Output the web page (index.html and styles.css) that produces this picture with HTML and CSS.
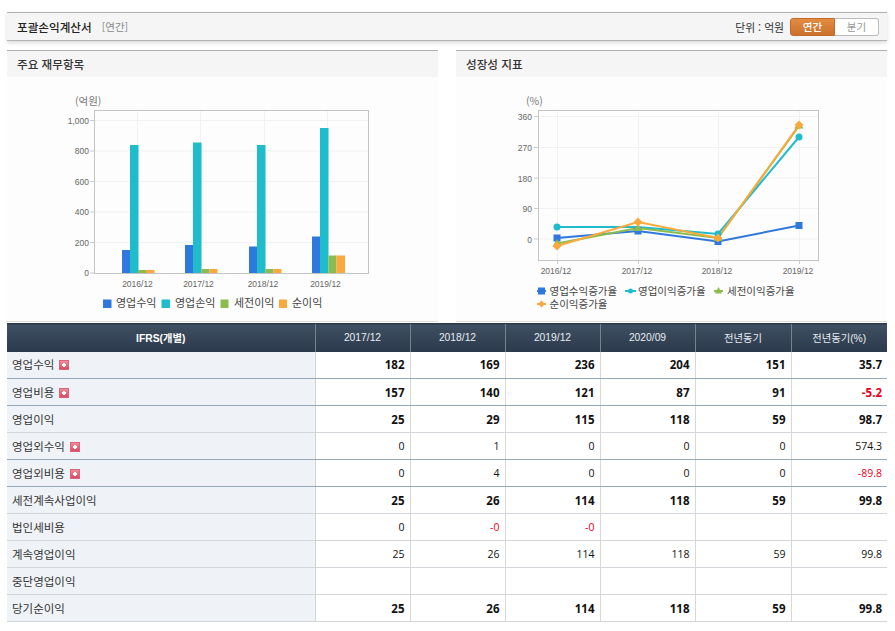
FILE: index.html
```html
<!DOCTYPE html>
<html lang="ko">
<head>
<meta charset="utf-8">
<title>포괄손익계산서</title>
<link rel="stylesheet" href="styles.css">
</head>
<body>
<div class="page">
  <div class="topbar">
    <div class="top-title"><strong>포괄손익계산서</strong><span class="period">[연간]</span></div>
    <div class="top-right">
      <span class="unit">단위 : 억원</span>
      <div class="toggle"><span class="tg on">연간</span><span class="tg off">분기</span></div>
    </div>
  </div>
  <div class="panels">
    <section class="panel">
      <h3 class="panel-title">주요 재무항목</h3>
      <svg class="chart" width="431" height="244" viewBox="7 77 431 244">
        <text class="unit-label" x="75" y="104.500">(억원)</text>
        <g class="grid">
          <path d="M94 120.5H369M94 151H369M94 181.5H369M94 212H369M94 242.5H369M137.5 110V273M200.5 110V273M264.5 110V273M327.5 110V273"/>
        </g>
        <rect class="frame" x="94.5" y="110.5" width="274" height="163"/>
        <g class="ticks"><path d="M90 120.5H94M90 151H94M90 181.5H94M90 212H94M90 242.5H94M90 273H94"/></g>
        <g class="axis" text-anchor="end">
          <text x="89" y="123.5">1,000</text><text x="89" y="154">800</text><text x="89" y="184.5">600</text><text x="89" y="215">400</text><text x="89" y="245.5">200</text><text x="89" y="276">0</text>
        </g>
        <g class="axis" text-anchor="middle">
          <text x="137.5" y="287">2016/12</text><text x="198.5" y="287">2017/12</text><text x="263" y="287">2018/12</text><text x="325.5" y="287">2019/12</text>
        </g>
        <g class="s-blue"><rect x="122" y="250" width="8" height="23"/><rect x="185" y="245" width="8" height="28"/><rect x="249" y="246.5" width="8" height="26.5"/><rect x="312" y="236.5" width="8" height="36.5"/></g>
        <g class="s-teal"><rect x="130" y="145" width="8.500" height="128"/><rect x="193" y="142.500" width="8.500" height="130.500"/><rect x="257" y="145" width="8.500" height="128"/><rect x="320" y="128" width="8.500" height="145"/></g>
        <g class="s-green"><rect x="138" y="270" width="8" height="3"/><rect x="201.500" y="269" width="8" height="4"/><rect x="265.500" y="269" width="8" height="4"/><rect x="328.500" y="255.500" width="8" height="17.500"/></g>
        <g class="s-orange"><rect x="146" y="270" width="8.500" height="3"/><rect x="209.500" y="269" width="8" height="4"/><rect x="273.500" y="269" width="8" height="4"/><rect x="336.500" y="255.500" width="8.500" height="17.500"/></g>
        <rect class="s-blue" x="103" y="299.500" width="8.500" height="8.500"/><text class="legend" x="116" y="307">영업수익</text>
        <rect class="s-teal" x="161.500" y="299.500" width="8.500" height="8.500"/><text class="legend" x="175" y="307">영업손익</text>
        <rect class="s-green" x="220.500" y="299.500" width="8" height="8.500"/><text class="legend" x="234" y="307">세전이익</text>
        <rect class="s-orange" x="279" y="299.500" width="8" height="8.500"/><text class="legend" x="292" y="307">순이익</text>
      </svg>
    </section>
    <section class="panel">
      <h3 class="panel-title">성장성 지표</h3>
      <svg class="chart" width="431" height="244" viewBox="456 77 431 244">
        <text class="unit-label" x="526" y="104.500">(%)</text>
        <g class="grid">
          <path d="M538 116.500H818M538 147.500H818M538 178H818M538 208.500H818M538 239H818M557.500 110V260M638.500 110V260M718.500 110V260M799.500 110V260"/>
        </g>
        <rect class="frame" x="538.500" y="110.500" width="280" height="150"/>
        <g class="ticks"><path d="M534 116.500H538M534 147.500H538M534 178H538M534 208.500H538M534 239H538M557.500 261V264M638.500 261V264M718.500 261V264M799.500 261V264"/></g>
        <g class="axis" text-anchor="end">
          <text x="532" y="120">360</text><text x="532" y="151">270</text><text x="532" y="181.500">180</text><text x="532" y="212">90</text><text x="532" y="242.500">0</text>
        </g>
        <g class="axis" text-anchor="middle">
          <text x="556" y="274">2016/12</text><text x="637" y="274">2017/12</text><text x="717" y="274">2018/12</text><text x="798" y="274">2019/12</text>
        </g>
        <polyline class="ln-blue" points="557,238 638,231 718,241.500 799,225.500"/>
        <polyline class="ln-teal" points="557,227 638,227 718,234 799,137"/>
        <polyline class="ln-green" points="557,243.500 638,228 718,238 799,126"/>
        <polyline class="ln-orange" points="557,246 638,222 718,238 799,125"/>
        <g class="s-blue"><rect x="553.500" y="234.500" width="7" height="7"/><rect x="634.500" y="227.500" width="7" height="7"/><rect x="714.500" y="238" width="7" height="7"/><rect x="795.500" y="222" width="7" height="7"/></g>
        <g class="s-teal"><circle cx="557" cy="227" r="3.500"/><circle cx="718" cy="234" r="3.500"/><circle cx="799" cy="137" r="3.500"/></g>
        <g class="s-green"><path d="M557 239l4.500 7.500h-9zM638 223.500l4.500 7.500h-9zM718 233.500l4.500 7.500h-9zM799 121l4.500 7.500h-9z"/></g>
        <g class="s-orange"><path d="M557 241.500l4.500 4.500-4.500 4.500-4.500-4.500zM638 217.500l4.500 4.500-4.500 4.500-4.500-4.500zM718 233.500l4.500 4.500-4.500 4.500-4.500-4.500zM799 120.500l4.500 4.500-4.500 4.500-4.500-4.500z"/></g>
        <path class="ln-blue" d="M537 291H546"/><rect class="s-blue" x="538" y="287.500" width="7" height="7"/><text class="legend narrow" x="549.500" y="295">영업수익증가율</text>
        <path class="ln-teal" d="M625 291H636"/><circle class="s-teal" cx="630.500" cy="291" r="2.500"/><text class="legend narrow" x="638" y="295">영업이익증가율</text>
        <path class="ln-green" d="M714 291H723"/><path class="s-green" d="M718.500 287l3.500 6.500h-7z"/><text class="legend narrow" x="727" y="295">세전이익증가율</text>
        <path class="ln-orange" d="M537 304H546"/><path class="s-orange" d="M541.500 300.500l3.500 3.500-3.500 3.500-3.500-3.500z"/><text class="legend narrow" x="549.500" y="308">순이익증가율</text>
      </svg>
    </section>
  </div>
  <table class="fin">
    <colgroup><col class="c-label"><col class="c-num"><col class="c-num"><col class="c-num"><col class="c-num"><col class="c-wide"><col class="c-wide"></colgroup>
    <thead>
      <tr><th class="th-first">IFRS(개별)</th><th>2017/12</th><th>2018/12</th><th>2019/12</th><th>2020/09</th><th>전년동기</th><th>전년동기(%)</th></tr>
    </thead>
    <tbody>
      <tr class="strong key"><td class="lbl">영업수익<i class="plus"></i></td><td>182</td><td>169</td><td>236</td><td>204</td><td>151</td><td>35.7</td></tr>
      <tr class="strong key"><td class="lbl">영업비용<i class="plus"></i></td><td>157</td><td>140</td><td>121</td><td>87</td><td>91</td><td class="neg">-5.2</td></tr>
      <tr class="strong"><td class="lbl">영업이익</td><td>25</td><td>29</td><td>115</td><td>118</td><td>59</td><td>98.7</td></tr>
      <tr class="key"><td class="lbl">영업외수익<i class="plus"></i></td><td>0</td><td>1</td><td>0</td><td>0</td><td>0</td><td>574.3</td></tr>
      <tr class="key"><td class="lbl">영업외비용<i class="plus"></i></td><td>0</td><td>4</td><td>0</td><td>0</td><td>0</td><td class="neg">-89.8</td></tr>
      <tr class="strong"><td class="lbl">세전계속사업이익</td><td>25</td><td>26</td><td>114</td><td>118</td><td>59</td><td>99.8</td></tr>
      <tr><td class="lbl">법인세비용</td><td>0</td><td class="neg">-0</td><td class="neg">-0</td><td></td><td></td><td></td></tr>
      <tr><td class="lbl">계속영업이익</td><td>25</td><td>26</td><td>114</td><td>118</td><td>59</td><td>99.8</td></tr>
      <tr><td class="lbl">중단영업이익</td><td></td><td></td><td></td><td></td><td></td><td></td></tr>
      <tr class="strong"><td class="lbl">당기순이익</td><td>25</td><td>26</td><td>114</td><td>118</td><td>59</td><td>99.8</td></tr>
    </tbody>
  </table>
</div>
</body>
</html>
```
FILE: styles.css
```css
* { box-sizing: border-box; }
html, body { margin: 0; padding: 0; background: #fff; }
body { font-family: "Noto Sans CJK KR", "Noto Sans", sans-serif; color: #333; overflow: hidden; }
.page { width: 880px; margin: 12px 0 0 7px; }

.topbar {
  height: 29px;
  display: flex;
  align-items: center;
  justify-content: space-between;
  padding: 0 8px 0 10px;
  background: #f5f5f5;
  border-top: 1px solid #b0b0b0;
  border-bottom: 1px solid #b4b4b4;
  box-shadow: 0 2px 4px rgba(0, 0, 0, .14);
}
.top-title { display: flex; align-items: center; font-size: 11.600px; }
.top-title strong { font-weight: 500; color: #222; }
.period { margin-left: 10px; font-size: 10.500px; color: #888; }
.top-right { display: flex; align-items: center; gap: 6px; }
.unit { font-size: 10.800px; color: #333; }
.toggle { display: flex; width: 89px; height: 18px; font-size: 10.500px; }
.tg { flex: 1; display: flex; align-items: center; justify-content: center; }
.tg.on { background: linear-gradient(#e38c42, #cb702c); border: 1px solid #c26a2a; border-radius: 3px 0 0 3px; color: #fff; font-weight: 500; }
.tg.off { background: #fff; border: 1px solid #bbb; border-left: 0; border-radius: 0 3px 3px 0; color: #999; }

.panels { display: flex; justify-content: space-between; margin-top: 9px; }
.panel { width: 431px; height: 272px; border-top: 1px solid #b0b0b0; border-bottom: 1px solid #ddd; background: #fdfdfd; }
.panel-title { margin: 0; height: 26px; padding-left: 10px; line-height: 27px; font-size: 11.600px; font-weight: 500; color: #333; background: #f5f5f5; }
.chart { display: block; }

.grid path { fill: none; stroke: #f0f1f2; stroke-width: 1; }
.frame { fill: none; stroke: #c4c4c4; stroke-width: 1; }
.ticks path { fill: none; stroke: #ccc; stroke-width: 1; }
.axis text { font-family: "Liberation Sans", sans-serif; font-size: 8.500px; fill: #666; }
.unit-label { font-size: 10.500px; fill: #777; }
.legend { font-size: 11px; fill: #444; }
.legend.narrow { font-size: 10.500px; }
.s-blue { fill: #2f78dd; }
.s-teal { fill: #1fbccc; }
.s-green { fill: #8cbb4e; }
.s-orange { fill: #fba93c; }
.ln-blue, .ln-teal, .ln-green, .ln-orange { fill: none; stroke-width: 2; }
.ln-blue { stroke: #2f78dd; }
.ln-teal { stroke: #1fbccc; }
.ln-green { stroke: #8cbb4e; }
.ln-orange { stroke: #fba93c; }

.fin { width: 880px; table-layout: fixed; border-collapse: collapse; margin-top: 1px; font-family: "Open Sans", "Noto Sans CJK KR", sans-serif; font-size: 10.500px; }
.c-label { width: 308px; }
.c-num { width: 95px; }
.c-wide { width: 96px; }
.fin th {
  height: 28px;
  padding: 0;
  font-family: "Liberation Sans", "Noto Sans CJK KR", sans-serif;
  font-weight: 400;
  font-size: 10.300px;
  color: #e8edf2;
  background: linear-gradient(#3f5062, #2a394b);
  border-left: 1px solid #75838f;
  border-top: 1px solid #2b3847;
}
.fin th.th-first { border-left: 0; font-weight: 700; color: #fff; }
.fin td {
  height: 27px;
  padding: 0 5px 0 0;
  text-align: right;
  color: #111;
  border-left: 1px solid #d8d8d8;
  border-bottom: 1px solid #d2d6da;
}
.fin tr.strong td { font-weight: 700; font-size: 11.500px; color: #111; }
.fin tr.key td { border-bottom-color: #93a8b8; }
.fin td.lbl, .fin tr.strong td.lbl {
  padding: 0 0 1px 5px;
  text-align: left;
  border-left: 0;
  border-right: 1px solid #d0d4d8;
  background: #eff3f8;
  font-family: "Noto Sans CJK KR", sans-serif;
  font-size: 11.500px;
  font-weight: 400;
  color: #333;
}
.fin td.neg, .fin tr.strong td.neg { color: #e8001c; }
.plus {
  position: relative;
  display: inline-block;
  width: 10px;
  height: 10px;
  margin-left: 5px;
  vertical-align: -1px;
  background: linear-gradient(#f58a9a, #dc4a63);
  border: 1px solid #d9657a;
}
.plus::before, .plus::after { content: ""; position: absolute; background: #fff; }
.plus::before { left: 2px; top: 3px; width: 4px; height: 2px; }
.plus::after { left: 3px; top: 2px; width: 2px; height: 4px; }
```
